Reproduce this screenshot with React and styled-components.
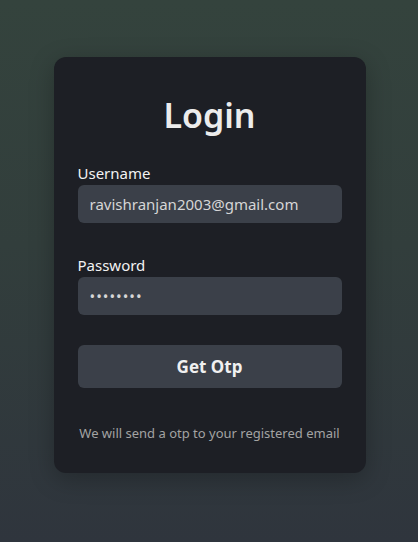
import React from "react";
import styled, { createGlobalStyle } from "styled-components";

const Global = createGlobalStyle`
  html, body { margin: 0; padding: 0; height: 100%; }
  body {
    font-family: "Noto Sans", "Open Sans", sans-serif;
    background: linear-gradient(180deg, #34433d 0%, #323e3c 45%, #2f353d 100%);
    min-height: 542px;
  }
  #root { min-height: 542px; }
`;

const Page = styled.div`
  display: flex;
  justify-content: center;
  padding: 57px 0 0 1px;
`;

const Card = styled.form`
  width: 312px;
  box-sizing: border-box;
  background: #1d1f25;
  border-radius: 12px;
  padding: 36px 24px 30px;
  display: flex;
  flex-direction: column;
  box-shadow: 0 6px 24px rgba(0, 0, 0, 0.25);
`;

const Title = styled.h1`
  margin: 0 0 26px;
  text-align: center;
  font-size: 34px;
  line-height: 44px;
  font-weight: 600;
  color: #ececec;
`;

const Field = styled.label`
  display: flex;
  flex-direction: column;
  gap: 2px;
  margin-bottom: ${(p) => p.$gap}px;
`;

const LabelText = styled.span`
  font-size: 15px;
  line-height: 20px;
  color: #f2f2f2;
`;

const Input = styled.input`
  height: 38px;
  box-sizing: border-box;
  border: none;
  outline: none;
  border-radius: 6px;
  background: #3b4049;
  color: #d6d6d6;
  font-family: inherit;
  font-size: 15px;
  padding: 0 12px;
  letter-spacing: ${(p) => (p.type === "password" ? "1px" : "0")};
`;

const Button = styled.button`
  height: 43px;
  border: none;
  border-radius: 6px;
  background: #3b4049;
  color: #f0f0f0;
  font-family: inherit;
  font-size: 17px;
  font-weight: 700;
  cursor: pointer;
`;

const Note = styled.p`
  margin: 35px 0 0;
  text-align: center;
  white-space: nowrap;
  font-size: 13px;
  line-height: 20px;
  color: #a3a3a3;
`;

export default function App() {
  return (
    <>
      <Global />
      <Page>
        <Card onSubmit={(e) => e.preventDefault()}>
          <Title>Login</Title>
          <Field $gap={32}>
            <LabelText>Username</LabelText>
            <Input type="text" defaultValue="ravishranjan2003@gmail.com" />
          </Field>
          <Field $gap={30}>
            <LabelText>Password</LabelText>
            <Input type="password" defaultValue="12345678" />
          </Field>
          <Button type="submit">Get Otp</Button>
          <Note>We will send a otp to your registered email</Note>
        </Card>
      </Page>
    </>
  );
}
